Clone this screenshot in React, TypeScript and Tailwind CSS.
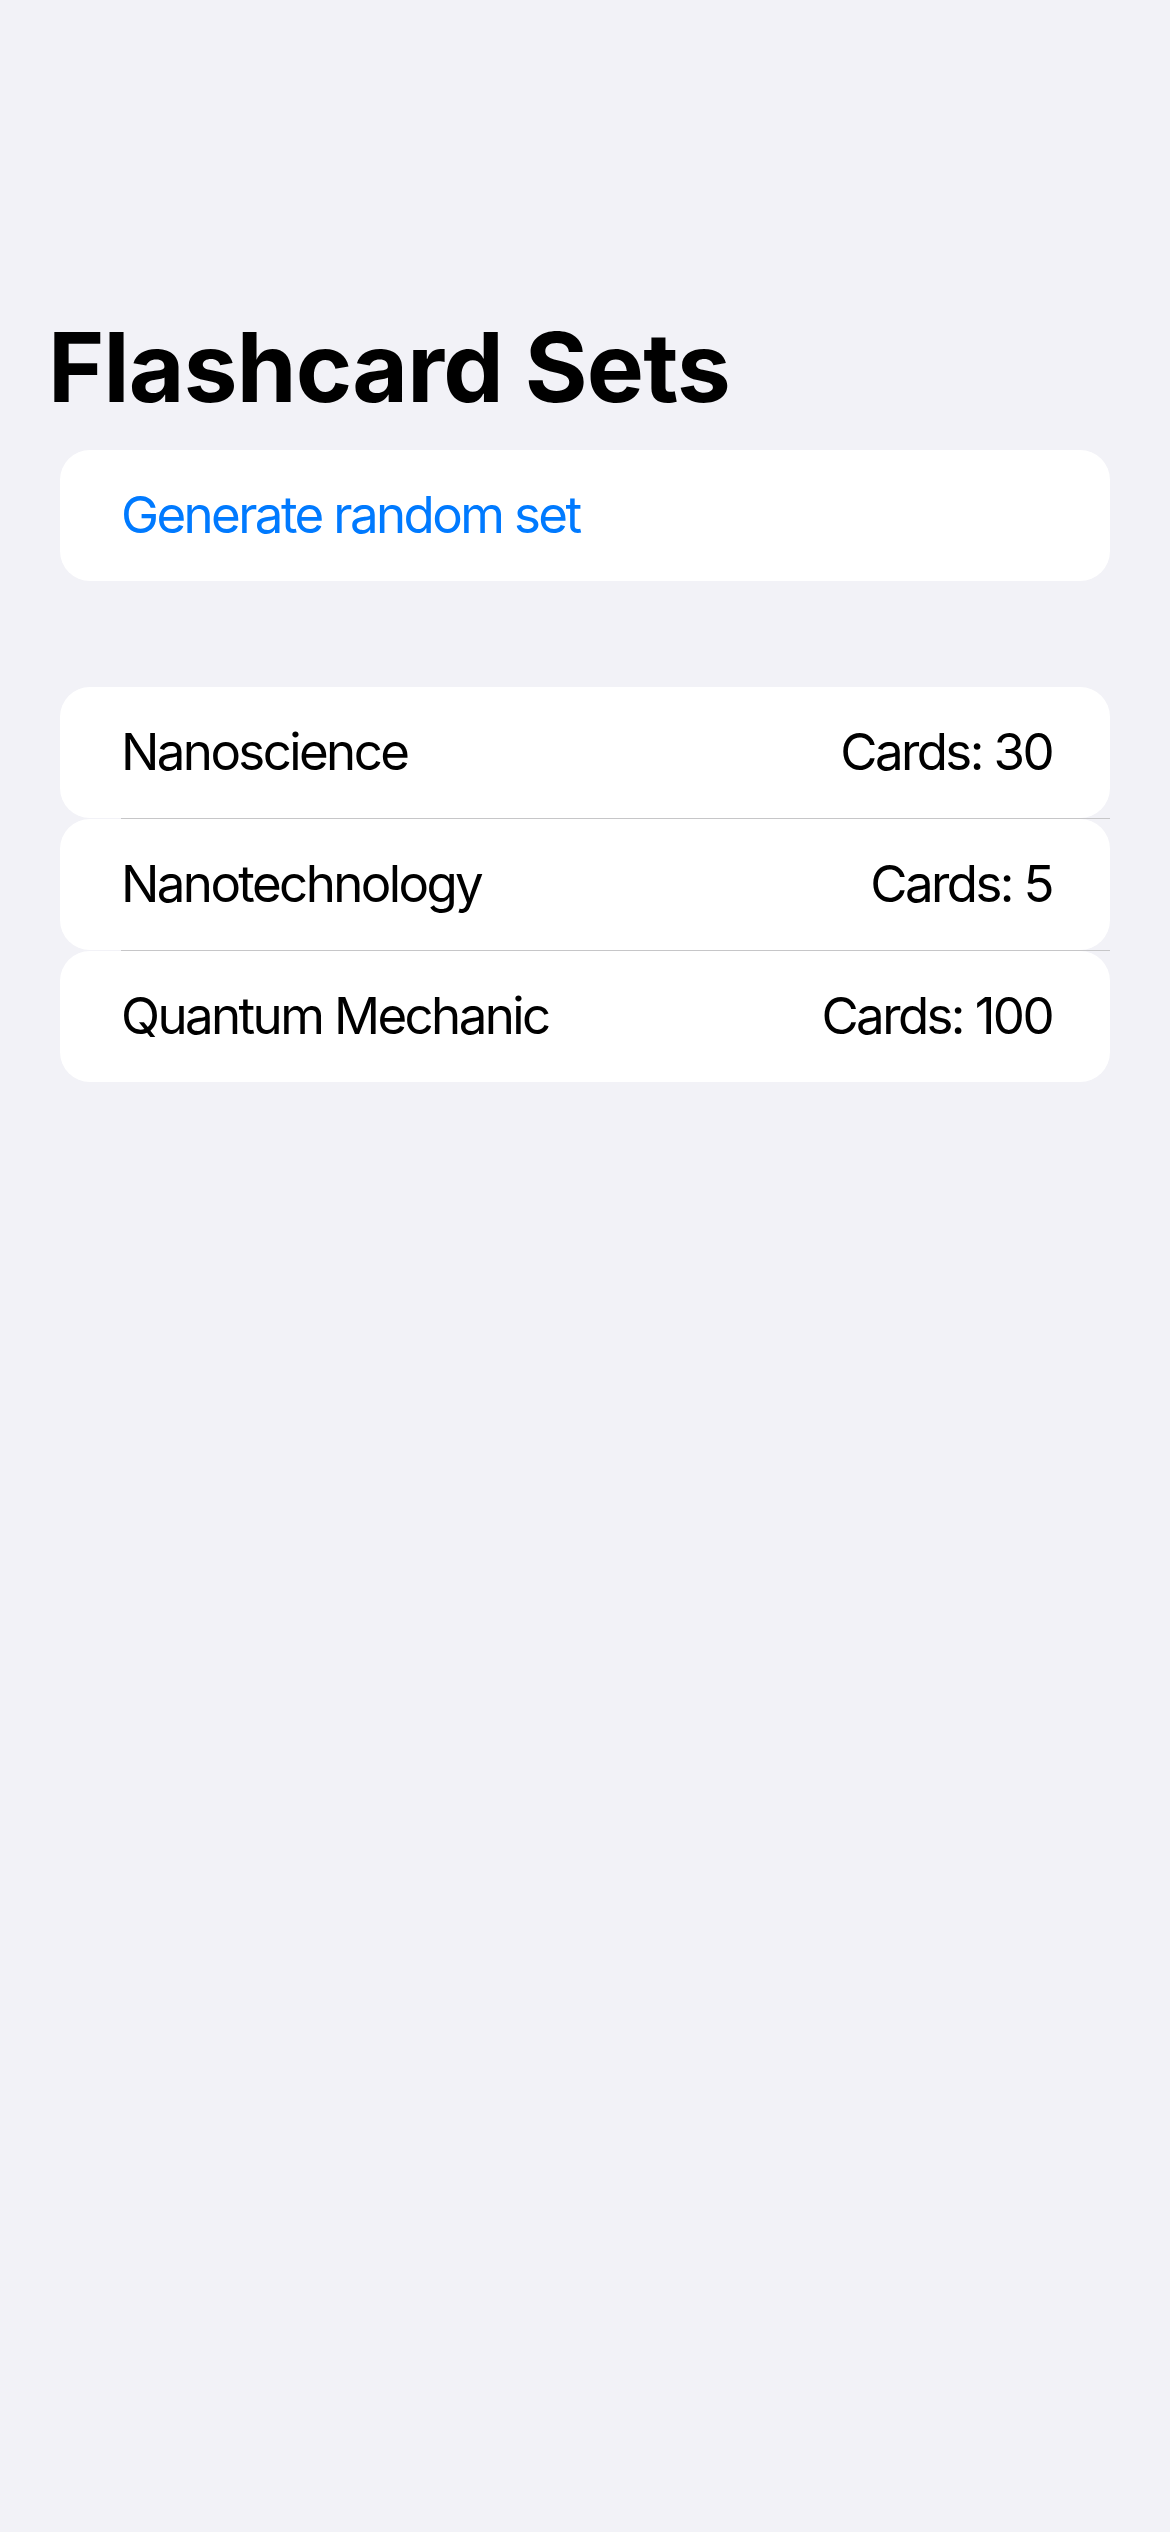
const sets = [
  { name: 'Nanoscience', cards: 30 },
  { name: 'Nanotechnology', cards: 5 },
  { name: 'Quantum Mechanic', cards: 100 },
];

const App = () => {
  return (
    <div className="min-h-[2532px] bg-[#f2f2f7] font-['Inter','Roboto',sans-serif] text-black">
      <div className="pt-[309px]">
        <h1 className="px-[48px] text-[96px] leading-[116px] font-bold tracking-[-0.8px]">Flashcard Sets</h1>

        <div className="mx-[60px] mt-[25px]">
          <button className="w-full h-[131px] rounded-[30px] bg-white px-[61px] flex items-center text-left text-[51px] tracking-[-2.6px] text-[#007aff]">
            Generate random set
          </button>
        </div>

        <div className="mx-[60px] mt-[106px] flex flex-col">
          {sets.map((set, i) => (
            <div key={set.name}>
              {i > 0 && (
                <div className="h-px pl-[61px]">
                  <div className="h-px bg-[#c6c6c8]" />
                </div>
              )}
              <div className="h-[131px] rounded-[30px] bg-white pl-[61px] pr-[58px] flex items-center justify-between text-[51px] tracking-[-2.6px]">
                <span>{set.name}</span>
                <span>Cards: {set.cards}</span>
              </div>
            </div>
          ))}
        </div>
      </div>
    </div>
  );
};

export default App;
